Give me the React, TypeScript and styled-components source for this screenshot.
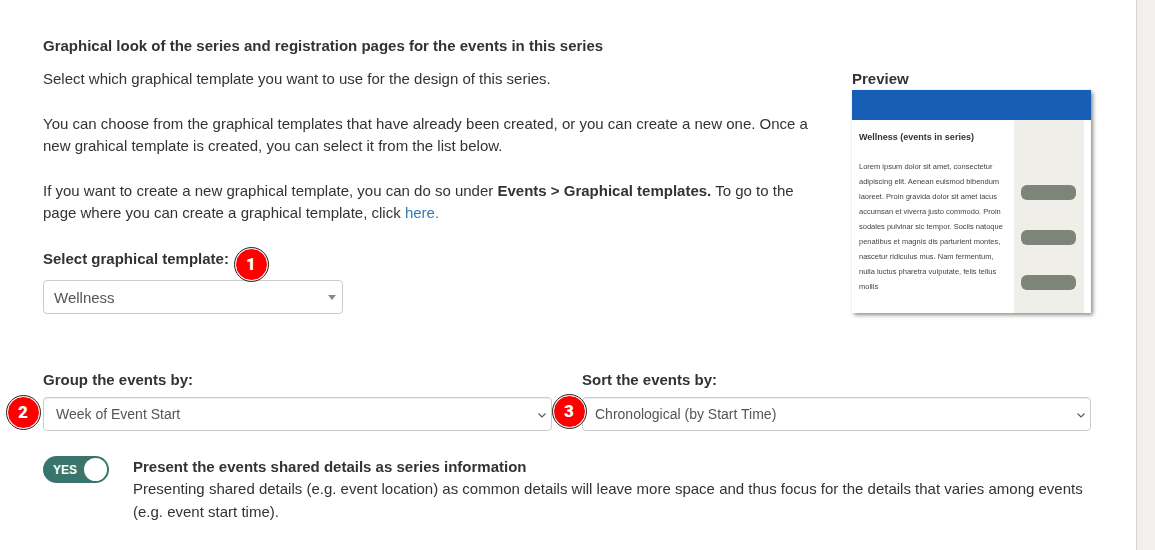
import React from "react";
import styled, { createGlobalStyle } from "styled-components";

const Global = createGlobalStyle`
  html, body { margin: 0; padding: 0; height: 100%; overflow: hidden; background: #fff; }
  body { font-family: "Liberation Sans", Arial, sans-serif; font-size: 15px; color: #333; }
`;

const Page = styled.div`
  display: flex;
  width: 1155px;
  height: 550px;
  overflow: hidden;
`;
const Main = styled.main`
  width: 1136px;
  padding: 36px 45px 0 43px;
  box-sizing: border-box;
  will-change: opacity;
`;
const Rail = styled.div`
  width: 19px;
  box-sizing: border-box;
  background: #f1f0ed;
  border-left: 1px solid #d9d6d1;
`;
const Heading = styled.h2`
  margin: 0 0 13px;
  font-size: 15px;
  line-height: 19px;
  font-weight: 700;
  color: #333;
`;
const Top = styled.div`
  display: flex;
  justify-content: space-between;
`;
const Intro = styled.div`
  width: 780px;
`;
const Para = styled.p`
  margin: 0 0 23px;
  font-size: 15px;
  line-height: 22px;
  color: #333;
`;
const Link = styled.a`
  color: #337ab7;
  text-decoration: none;
`;
const Label = styled.label`
  display: block;
  font-size: 15px;
  font-weight: 700;
  line-height: 20px;
  color: #333;
`;
const LabelRow = styled.div`
  position: relative;
  width: max-content;
  margin-top: 25px;
  margin-bottom: 11px;
`;
const Badge = styled.span<{ $left: number; $top: number }>`
  position: absolute;
  left: ${(p) => p.$left}px;
  top: ${(p) => p.$top}px;
  width: 31px;
  height: 31px;
  border-radius: 50%;
  background: #fe0000;
  border: 1px solid #fff;
  outline: 1px solid #222;
  display: flex;
  align-items: center;
  justify-content: center;
  font-family: Roboto, sans-serif;
  font-weight: 900;
  font-size: 17px;
  line-height: 1;
  color: #fff;
  z-index: 2;
`;
const ComboBox = styled.div`
  position: relative;
  width: 300px;
  height: 34px;
  box-sizing: border-box;
  border: 1px solid #ccc;
  border-radius: 4px;
  padding: 0 10px;
  display: flex;
  align-items: center;
  font-size: 15px;
  color: #555;
  &::after {
    content: "";
    position: absolute;
    right: 6px;
    top: 14px;
    border-style: solid;
    border-width: 5px 4px 0 4px;
    border-color: #888 transparent transparent transparent;
  }
`;
const PreviewPane = styled.aside`
  width: 239px;
  margin-top: 1px;
`;
const PreviewTitle = styled.div`
  font-size: 15px;
  font-weight: 700;
  line-height: 20px;
  margin-bottom: 1px;
  color: #333;
`;
const PreviewCard = styled.div`
  width: 239px;
  height: 223px;
  box-shadow: 2px 2px 4px rgba(0, 0, 0, 0.45);
  background: #fff;
`;
const PreviewBanner = styled.div`
  height: 30px;
  background: #175eb6;
`;
const PreviewBody = styled.div`
  display: flex;
  height: 193px;
  padding-right: 7px;
`;
const PreviewText = styled.div`
  flex: 1;
  padding: 7px 9px 0 7px;
`;
const PreviewName = styled.div`
  font-size: 9px;
  font-weight: 700;
  line-height: 20px;
  margin-bottom: 12px;
  color: #333;
`;
const PreviewLorem = styled.div`
  font-size: 7.5px;
  line-height: 15px;
  color: #444;
`;
const PreviewSide = styled.div`
  width: 70px;
  background: #efeee8;
  display: flex;
  flex-direction: column;
  gap: 30px;
  padding: 65px 0 0 7px;
  box-sizing: border-box;
`;
const PreviewButton = styled.div`
  width: 55px;
  height: 15px;
  border-radius: 6px;
  background: #7d8579;
`;
const Selects = styled.div`
  display: grid;
  grid-template-columns: 509px 509px;
  column-gap: 30px;
  margin-top: 56px;
`;
const Field = styled.div`
  position: relative;
`;
const FieldLabel = styled(Label)`
  margin-bottom: 7px;
`;
const NativeBox = styled.div`
  position: relative;
  height: 34px;
  box-sizing: border-box;
  border: 1px solid #ccc;
  border-radius: 4px;
  box-shadow: inset 0 1px 1px rgba(0, 0, 0, 0.075);
  padding: 0 12px;
  display: flex;
  align-items: center;
  font-size: 14px;
  color: #555;
`;
const Chevron = styled.svg`
  position: absolute;
  right: 4px;
  top: 13px;
  width: 10px;
  height: 8px;
`;
const ToggleRow = styled.div`
  display: flex;
  align-items: flex-start;
  gap: 24px;
  margin-top: 25px;
`;
const Toggle = styled.div`
  position: relative;
  flex: none;
  width: 66px;
  height: 27px;
  border-radius: 14px;
  background: #39756c;
  color: #fff;
  font-size: 12px;
  font-weight: 700;
  display: flex;
  align-items: center;
  padding-left: 10px;
  box-sizing: border-box;
  &::after {
    content: "";
    position: absolute;
    right: 2px;
    top: 2px;
    width: 23px;
    height: 23px;
    border-radius: 50%;
    background: #fff;
  }
`;
const ToggleText = styled.div`
  font-size: 15px;
  line-height: 22.5px;
  margin-top: -0.25px;
  color: #333;
`;

const chevron = (
  <Chevron viewBox="0 0 10 8">
    <path d="M1.5 2.5 L5 6 L8.5 2.5" fill="none" stroke="#555" strokeWidth="1.1" />
  </Chevron>
);

export default function App() {
  return (
    <Page>
      <Global />
      <Main>
        <Heading>Graphical look of the series and registration pages for the events in this series</Heading>
        <Top>
          <Intro>
            <Para>Select which graphical template you want to use for the design of this series.</Para>
            <Para>
              You can choose from the graphical templates that have already been created, or you can create a new one. Once a new grahical template is created, you can select it from the list below.
            </Para>
            <Para>
              If you want to create a new graphical template, you can do so under <b>Events &gt; Graphical templates.</b> To go to the page where you can create a graphical template, click <Link href="#">here.</Link>
            </Para>
            <LabelRow>
              <Label>Select graphical template:</Label>
              <Badge $left={191.5} $top={-1.5}>1</Badge>
            </LabelRow>
            <ComboBox>Wellness</ComboBox>
          </Intro>
          <PreviewPane>
            <PreviewTitle>Preview</PreviewTitle>
            <PreviewCard>
              <PreviewBanner />
              <PreviewBody>
                <PreviewText>
                  <PreviewName>Wellness (events in series)</PreviewName>
                  <PreviewLorem>
                    Lorem ipsum dolor sit amet, consectetur adipiscing elit. Aenean euismod bibendum laoreet. Proin gravida dolor sit amet lacus accumsan et viverra justo commodo. Proin sodales pulvinar sic tempor. Sociis natoque penatibus et magnis dis parturient montes, nascetur ridiculus mus. Nam fermentum, nulla luctus pharetra vulputate, felis tellus mollis
                  </PreviewLorem>
                </PreviewText>
                <PreviewSide>
                  <PreviewButton />
                  <PreviewButton />
                  <PreviewButton />
                </PreviewSide>
              </PreviewBody>
            </PreviewCard>
          </PreviewPane>
        </Top>
        <Selects>
          <Field>
            <FieldLabel>Group the events by:</FieldLabel>
            <NativeBox>Week of Event Start{chevron}</NativeBox>
            <Badge $left={-36.5} $top={25.5}>2</Badge>
          </Field>
          <Field>
            <FieldLabel>Sort the events by:</FieldLabel>
            <NativeBox>Chronological (by Start Time){chevron}</NativeBox>
            <Badge $left={-29.5} $top={24.5}>3</Badge>
          </Field>
        </Selects>
        <ToggleRow>
          <Toggle>YES</Toggle>
          <ToggleText>
            <b>Present the events shared details as series information</b>
            <br />
            Presenting shared details (e.g. event location) as common details will leave more space and thus focus for the details that varies among events (e.g. event start time).
          </ToggleText>
        </ToggleRow>
      </Main>
      <Rail />
    </Page>
  );
}
